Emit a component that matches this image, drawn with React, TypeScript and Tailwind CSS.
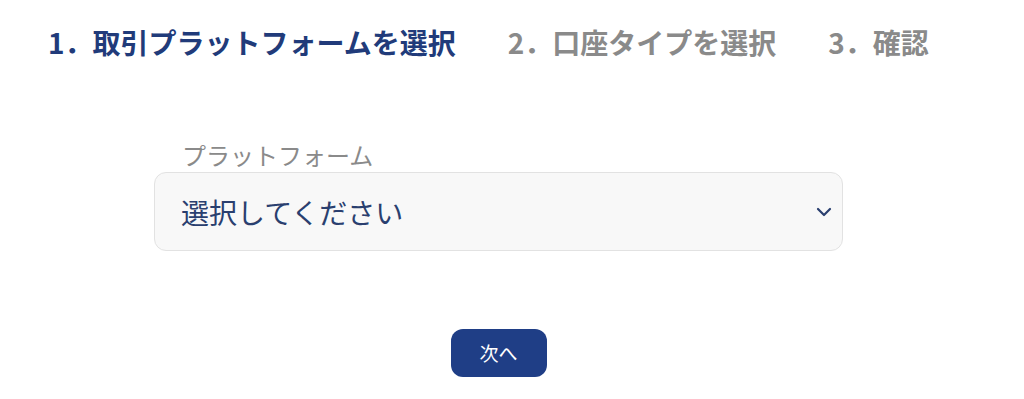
import { ChevronDown } from "lucide-react";

const steps = [
  { num: "1", label: "取引プラットフォームを選択", active: true },
  { num: "2", label: "口座タイプを選択", active: false },
  { num: "3", label: "確認", active: false },
];

export default function App() {
  return (
    <div
      className="w-[1024px] h-[399px] bg-white overflow-hidden"
      style={{ fontFamily: '"Noto Sans CJK JP", "Noto Sans", sans-serif' }}
    >
      <div className="flex items-center gap-[52px] pl-[48px] pt-[22px] h-[62px]">
        {steps.map((s) => (
          <div
            key={s.num}
            className={
              "text-[28px] font-bold leading-none whitespace-nowrap " +
              (s.active ? "text-[#213b7a]" : "text-[#8a8a8a]")
            }
          >
            {s.num}．{s.label}
          </div>
        ))}
      </div>

      <div className="ml-[154px] w-[689px] flex flex-col mt-[81px]">
        <label className="ml-[28px] text-[24px] leading-none text-[#8a8a8a] mb-[5px]">
          プラットフォーム
        </label>
        <div className="h-[79px] rounded-[12px] border border-[#e2e2e2] bg-[#f8f8f8] flex items-center justify-between pl-[26px] pr-[6px]">
          <span className="text-[28px] text-[#2a3f6f] leading-none">選択してください</span>
          <ChevronDown className="w-[24px] h-[24px] text-[#2a3f6f]" strokeWidth={2.2} />
        </div>
        <button className="self-center mt-[78px] w-[96px] h-[48px] rounded-[12px] bg-[#1f3e86] text-white text-[19px]">
          次へ
        </button>
      </div>
    </div>
  );
}
